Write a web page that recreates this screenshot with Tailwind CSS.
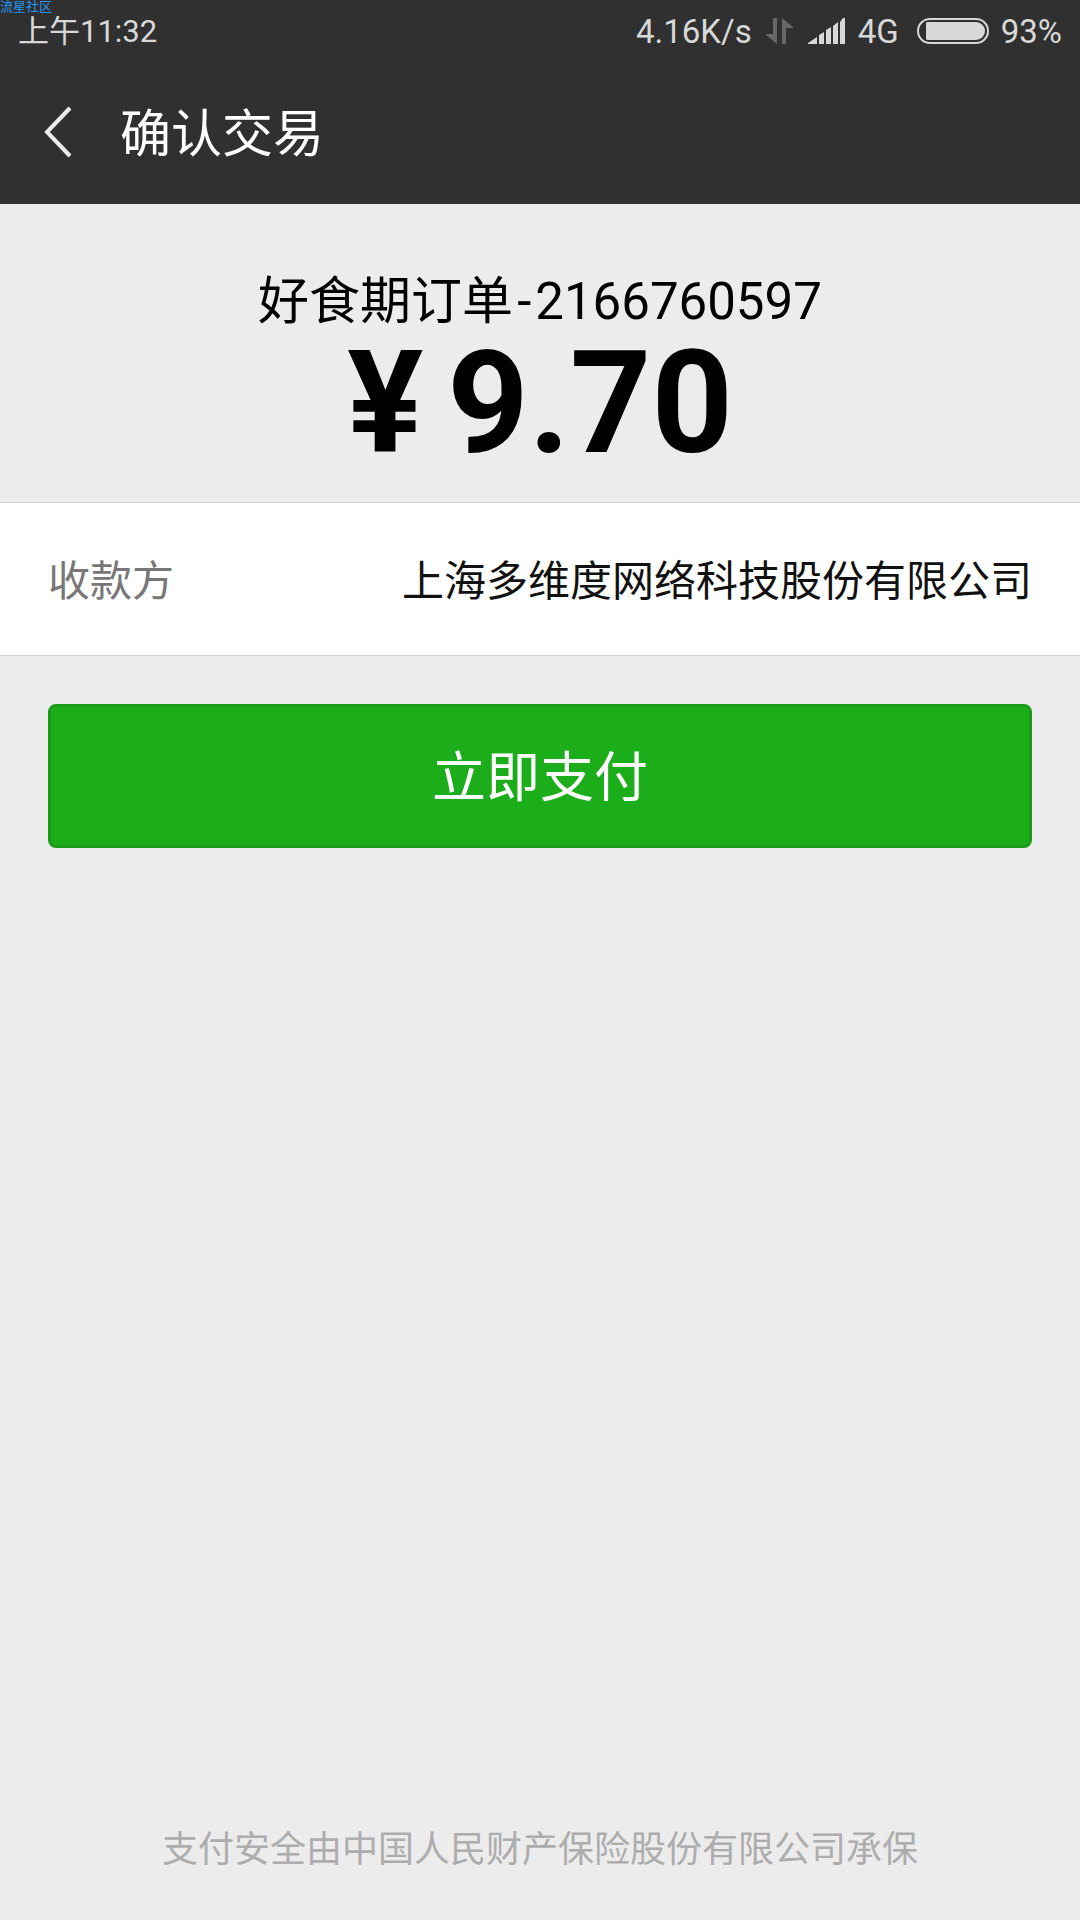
<!DOCTYPE html>
<html lang="zh-CN">
<head>
<meta charset="utf-8">
<meta name="viewport" content="width=device-width, initial-scale=1">
<title>确认交易</title>
<script src="https://cdn.jsdelivr.net/npm/@tailwindcss/browser@4"></script>
</head>
<body class="flex min-h-screen flex-col bg-[#ececec] font-['Roboto','Noto_Sans_CJK_SC',sans-serif] text-black">
  <header class="bg-[#303030]">
    <span class="absolute top-0 left-0 text-[13px] leading-[13px] text-[#2196f3]">流星社区</span>
    <div class="flex h-[62px] items-center justify-between px-[18px] text-[33px] leading-none text-[#d8d8d8]">
      <time class="text-[31px]">上午11:32</time>
      <div class="flex items-center">
        <span>4.16K/s</span>
        <svg class="ml-[14px] h-[26px] w-7" viewBox="0 0 28 26" fill="#686868" aria-hidden="true"><path d="M7 1.500Q7 0 8.500 0H11V26L0 17V16H7Z"/><path d="M16 0L27 9V10H20V24.500Q20 26 18.500 26H16Z"/></svg>
        <svg class="ml-[14px] h-[26px] w-[38px]" viewBox="0 0 38 26" fill="#d8d8d8" aria-hidden="true"><path d="M0 26V25L9 19V26ZM11 26V17L16 14V26ZM18 26V12L23 9V26ZM25 26V8L30 4V26ZM32 26V4L35 0H37V26Z"/></svg>
        <span class="ml-3">4G</span>
        <svg class="ml-[18px] h-[26px] w-[72px]" viewBox="0 0 72 26" aria-hidden="true"><rect x="1" y="1" width="70" height="24" rx="12" fill="none" stroke="#d8d8d8" stroke-width="2"/><path d="M9 5Q9 4 11 4H59A9 9 0 0 1 59 22H11Q9 22 9 21Z" fill="#d8d8d8"/></svg>
        <span class="ml-3">93%</span>
      </div>
    </div>
    <div class="flex h-[142px] items-center pb-[2px] pl-10">
      <button type="button" aria-label="返回" class="mr-11 flex h-16 w-9 items-center justify-center">
        <svg class="h-[52px] w-7" viewBox="0 0 28 52" fill="none" stroke="#ececec" stroke-width="4" aria-hidden="true"><path d="M26 2L3 26L26 50"/></svg>
      </button>
      <h1 class="pt-1 text-[51px] leading-none text-white">确认交易</h1>
    </div>
  </header>

  <main>
    <section class="flex flex-col items-center pt-[66px] pb-7">
      <p class="text-[51px] leading-[64px]">好食期订单<span class="px-1">-</span>2166760597</p>
      <p class="flex gap-6 text-[142px] leading-[140px] font-bold"><span>¥</span><span>9.70</span></p>
    </section>
    <dl class="flex h-[154px] items-center justify-between border-y border-[#d0d0d0] bg-white px-12 pt-[6px] text-[42px] leading-none">
      <dt class="text-[#777777]">收款方</dt>
      <dd class="text-[#111111]">上海多维度网络科技股份有限公司</dd>
    </dl>
    <div class="px-12 pt-12">
      <button type="button" class="h-36 w-full rounded-lg border-3 border-[#1a9c19] bg-[#1bad1a] pt-[6px] text-[54px] leading-none text-white">立即支付</button>
    </div>
  </main>

  <footer class="mt-auto pb-[52px] text-center text-[36px] leading-9 text-[#adadad]">支付安全由中国人民财产保险股份有限公司承保</footer>
</body>
</html>
